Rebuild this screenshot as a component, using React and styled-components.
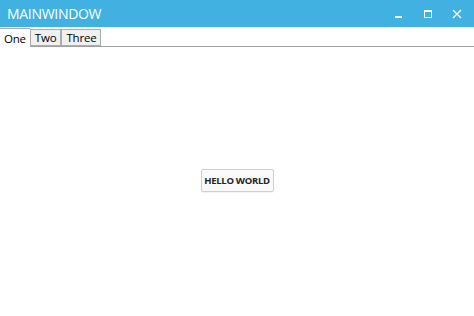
import React from "react";
import styled, { createGlobalStyle } from "styled-components";

const Global = createGlobalStyle`
  html, body { margin: 0; padding: 0; background: #fff; }
  body { font-family: "Open Sans", "Noto Sans", sans-serif; }
`;

const Window = styled.div`
  width: 474px;
  height: 316px;
  display: flex;
  flex-direction: column;
  background: #fff;
  overflow: hidden;
`;

const TitleBar = styled.div`
  height: 27px;
  background: #41b1e1;
  display: flex;
  align-items: center;
  padding-left: 7px;
  padding-right: 3px;
  flex-shrink: 0;
`;

const Title = styled.div`
  color: #fff;
  font-family: "Open Sans", sans-serif;
  font-size: 14px;
  letter-spacing: -0.3px;
  flex: 1;
  line-height: 27px;
`;

const Controls = styled.div`
  display: flex;
  height: 27px;
`;

const CtrlBtn = styled.div`
  width: 29px;
  height: 27px;
  display: flex;
  align-items: center;
  justify-content: center;
`;

const TabStrip = styled.div`
  display: flex;
  align-items: flex-end;
  height: 19px;
  border-bottom: 1px solid #a0a0a0;
  flex-shrink: 0;
`;

const Tab = styled.div`
  height: ${p => (p.$active ? "19px" : "17px")};
  box-sizing: border-box;
  padding: 0 4px;
  margin-bottom: ${p => (p.$active ? "-1px" : "0")};
  background: ${p => (p.$active ? "#fff" : "#f0f0f0")};
  border: 1px solid #acacac;
  border-bottom: ${p => (p.$active ? "none" : "1px solid #acacac")};
  border-left: ${p => (p.$first ? "none" : "1px solid #acacac")};
  border-right: ${p => (p.$active ? "none" : "1px solid #acacac")};
  font-family: "Open Sans", sans-serif;
  font-size: 11.5px;
  color: #000;
  display: flex;
  align-items: center;
  letter-spacing: -0.2px;
`;

const Content = styled.div`
  flex: 1;
  display: flex;
  align-items: center;
  justify-content: center;
  padding-bottom: 2px;
`;

const Button = styled.button`
  height: 23px;
  width: 73px;
  padding: 0;
  background: #fafafa;
  border: 1px solid #cfcfcf;
  border-radius: 2px;
  font-family: "Open Sans", sans-serif;
  font-weight: 700;
  font-size: 9.5px;
  color: #222;
  letter-spacing: -0.3px;
  box-shadow: 0 1px 1px rgba(0,0,0,0.05);
`;

export default function App() {
  return (
    <>
      <Global />
      <Window>
        <TitleBar>
          <Title>MAINWINDOW</Title>
          <Controls>
            <CtrlBtn>
              <svg width="10" height="10" viewBox="0 0 10 10">
                <rect x="1" y="7" width="7" height="2" fill="#fff" />
              </svg>
            </CtrlBtn>
            <CtrlBtn>
              <svg width="10" height="10" viewBox="0 0 10 10">
                <rect x="1.5" y="1.5" width="7" height="7" fill="none" stroke="#fff" strokeWidth="1" />
                <rect x="1" y="1" width="8" height="2" fill="#fff" />
              </svg>
            </CtrlBtn>
            <CtrlBtn>
              <svg width="10" height="10" viewBox="0 0 10 10">
                <path d="M1 1 L9 9 M9 1 L1 9" stroke="#fff" strokeWidth="1.3" />
              </svg>
            </CtrlBtn>
          </Controls>
        </TitleBar>
        <TabStrip>
          <Tab $active $first>One</Tab>
          <Tab>Two</Tab>
          <Tab>Three</Tab>
        </TabStrip>
        <Content>
          <Button>HELLO WORLD</Button>
        </Content>
      </Window>
    </>
  );
}
